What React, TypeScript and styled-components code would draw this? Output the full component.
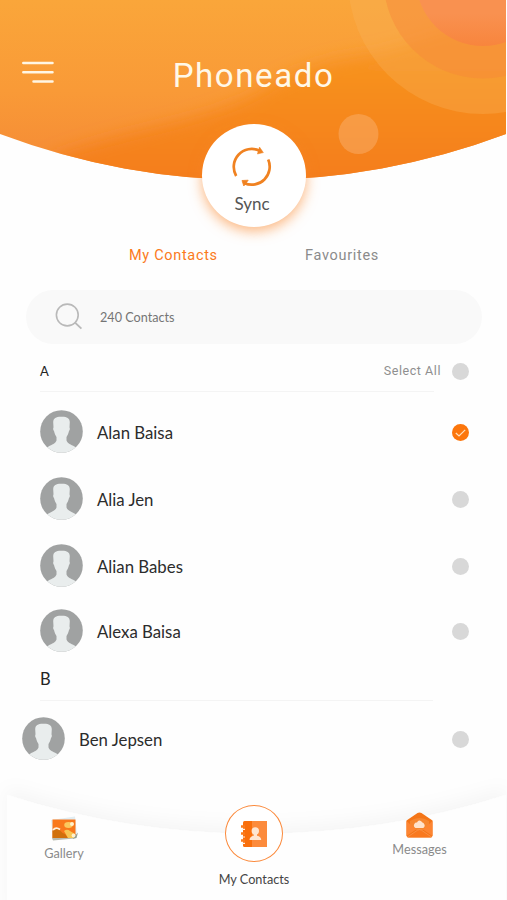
import React from 'react';
import styled, { createGlobalStyle } from 'styled-components';

const GlobalStyle = createGlobalStyle`
  * { box-sizing: border-box; }
  body { margin: 0; background: #fefefe; }
  button { border: 0; padding: 0; background: none; font: inherit; color: inherit; cursor: pointer; }
  svg { display: block; }
`;

const Screen = styled.div`
  width: 507px;
  height: 900px;
  overflow: hidden;
  display: flex;
  flex-direction: column;
  background: #fefefe;
  font-family: Lato, sans-serif;
  color: #2c2c2c;

  & > * { flex-shrink: 0; }
`;

const Header = styled.header`
  position: relative;
  height: 227px;
  display: flex;
  flex-direction: column;
  justify-content: space-between;
`;

const HeaderArt = styled.svg`
  position: absolute;
  inset: 0;
`;

const TitleBar = styled.div`
  position: relative;
  display: grid;
  grid-template-columns: 32px 1fr 32px;
  align-items: start;
  padding: 55px 22px 0;
`;

const MenuButton = styled.button`
  margin-top: 6px;
`;

const Title = styled.h1`
  margin: 1px 0 0;
  text-align: center;
  font: 400 33px/40px Roboto, sans-serif;
  letter-spacing: 1.6px;
  color: #fff8e8;
`;

const SyncButton = styled.button`
  position: relative;
  align-self: center;
  width: 104px;
  height: 103px;
  border-radius: 50%;
  background: #fff;
  box-shadow: 0 4px 13px rgba(252, 134, 40, 0.6);
  display: flex;
  flex-direction: column;
  align-items: center;
  padding: 22px 3px 0 0;
  gap: 5px;
  font-size: 17px;
  line-height: 22px;
  color: #555;
`;

const Tabs = styled.nav`
  display: flex;
  justify-content: space-between;
  margin: 19px 128px 0 129px;
  height: 20px;
`;

const Tab = styled.button<{ $active?: boolean }>`
  font: 400 14.5px/20px Roboto, sans-serif;
  letter-spacing: 0.68px;
  white-space: nowrap;
  color: ${(p) => (p.$active ? '#fb7a1c' : '#8b8b8b')};
`;

const Search = styled.label`
  display: flex;
  align-items: center;
  height: 54px;
  margin: 24px 25px 0 26px;
  padding-left: 29px;
  gap: 17px;
  border-radius: 27px;
  background: #f9f9f9;
  font-size: 12.65px;
  color: #757575;
`;

const GroupHead = styled.div<{ $height: number; $size: number; $shift: number }>`
  display: flex;
  align-items: center;
  height: ${(p) => p.$height}px;
  padding: ${(p) => Math.max(p.$shift, 0)}px 38px ${(p) => Math.max(-p.$shift, 0)}px 40px;
  font-size: ${(p) => p.$size}px;
  color: #242424;
`;

const SelectAll = styled.span`
  margin-left: auto;
  margin-right: 11px;
  font: 400 12.5px/16px Roboto, sans-serif;
  letter-spacing: 0.55px;
  color: #8f8f8f;
`;

const Rule = styled.hr<{ $width: number }>`
  width: ${(p) => p.$width}px;
  height: 1px;
  border: 0;
  margin: 0 0 0 40px;
  background: #f4f4f4;
`;

const List = styled.ul<{ $top?: number }>`
  list-style: none;
  margin: 0;
  padding: ${(p) => p.$top ?? 0}px 0 0;
`;

const Row = styled.li<{ $height: number; $inset?: number }>`
  display: flex;
  align-items: center;
  height: ${(p) => p.$height}px;
  padding: 0 38px 0 ${(p) => p.$inset ?? 40}px;
  gap: 14px;
`;

const Name = styled.span`
  font-size: 16.8px;
  line-height: 20px;
  padding-top: 3px;
  margin-right: auto;
`;

const Check = styled.button<{ $checked?: boolean; $drop?: number }>`
  width: 17px;
  height: 17px;
  border-radius: 50%;
  display: grid;
  place-items: center;
  margin-top: ${(p) => p.$drop ?? 0}px;
  background: ${(p) => (p.$checked ? '#fc760c' : '#d8d8d8')};
`;

const BottomBar = styled.footer`
  position: relative;
  height: 124px;
  margin-top: auto;
  display: grid;
  grid-template-columns: 128px 252px 79px;
  align-items: start;
  padding-top: 29px;
`;

const BarArt = styled.svg`
  position: absolute;
  inset: 0;
`;

const NavItem = styled.button<{ $top: number; $gap: number; $active?: boolean }>`
  position: relative;
  display: flex;
  flex-direction: column;
  align-items: center;
  gap: ${(p) => p.$gap}px;
  padding-top: ${(p) => p.$top}px;
  font-size: 12.7px;
  line-height: 16px;
  white-space: nowrap;
  color: ${(p) => (p.$active ? '#444' : '#8a8a8a')};
`;

const Disc = styled.span`
  width: 58px;
  height: 57px;
  border: 1.5px solid #fb8a3c;
  border-radius: 50%;
  background: #fff;
  display: grid;
  place-items: center;
`;

const Avatar = () => (
  <svg width="43" height="43" viewBox="0 0 43 43">
    <defs>
      <clipPath id="avatar-disc"><circle cx="21.5" cy="21.5" r="21.3" /></clipPath>
    </defs>
    <g clipPath="url(#avatar-disc)">
      <rect width="43" height="43" fill="#a0a2a2" />
      <path
        d="M21.500 6.800C26.500 6.600 29.600 8 29.800 12L29.500 17.500C30.100 18.300 29.800 20.400 29 21C28.500 23.500 27.400 25.500 26.500 27V30.500C27.500 33.500 31 34.500 34.500 36.500C36.500 37.700 37.500 39 38.500 41V44H4.500V41C5.500 39 6.500 37.700 8.500 36.500C12 34.500 15.500 33.500 16.500 30.500V27C15.600 25.500 14.500 23.500 14 21C13.200 20.400 12.900 18.300 13.500 17.500L13.200 12C13.400 8 16.500 6.600 21.500 6.800Z"
        fill="#e9eded"
      />
    </g>
  </svg>
);

const HeaderBackground = () => (
  <HeaderArt width="507" height="227" viewBox="0 0 507 227">
    <defs>
      <linearGradient id="sky" x1="0" y1="0" x2="0" y2="1">
        <stop offset="0" stopColor="#faa63a" />
        <stop offset="0.5" stopColor="#f99a37" />
        <stop offset="0.8" stopColor="#f68f36" />
      </linearGradient>
      <linearGradient id="dune" gradientUnits="userSpaceOnUse" x1="0" y1="40" x2="0" y2="180">
        <stop offset="0" stopColor="#f89722" />
        <stop offset="0.5" stopColor="#f6891c" />
        <stop offset="1" stopColor="#f47d1a" />
      </linearGradient>
      <linearGradient id="core" gradientUnits="userSpaceOnUse" x1="0" y1="0" x2="0" y2="46">
        <stop offset="0.300" stopColor="#f99150" />
        <stop offset="1" stopColor="#f8853d" />
      </linearGradient>
      <filter id="soft" x="-20%" y="-20%" width="140%" height="140%">
        <feGaussianBlur stdDeviation="8" />
      </filter>
      <clipPath id="bowl"><path d="M0 0H506V134A719 719 0 0 1 0 134Z" /></clipPath>
    </defs>
    <g clipPath="url(#bowl)">
      <rect width="506" height="182" fill="url(#sky)" />
      <path
        d="M50 158C120 130 210 122 262 90C300 66 335 58 370 54C430 44 450 18 540 14V240H40Z"
        fill="url(#dune)"
        filter="url(#soft)"
      />
      <circle cx="483" cy="-21" r="135" fill="#fab35c" fillOpacity="0.32" />
      <circle cx="483" cy="-21" r="99.500" fill="#f6873a" fillOpacity="0.45" />
      <circle cx="483" cy="-21" r="67" fill="url(#core)" />
      <circle cx="358.500" cy="134" r="20" fill="#fbb87c" fillOpacity="0.42" />
    </g>
  </HeaderArt>
);

const MenuIcon = () => (
  <svg width="32" height="23" viewBox="0 0 32 23" stroke="#fff6e4" strokeWidth="2.500" strokeLinecap="round">
    <path d="M1.300 2H30.500M1.300 11.300H30.500M11.500 20.600H30.500" />
  </svg>
);

const SyncIcon = () => (
  <svg width="42" height="42" viewBox="0 0 42 42" fill="none" stroke="#f08221" strokeWidth="2.700">
    <path d="M5.200 30A18 18 0 0 1 28.500 4.700" />
    <path d="M37.200 13.500A18 18 0 0 1 13.500 37.200" />
    <path d="M28.500 1L32.400 6.600L26.400 8Z" fill="#f08221" strokeWidth=".5" />
    <path d="M11 34.500L17.200 34.200L12.800 40Z" fill="#f08221" strokeWidth=".8" />
  </svg>
);

const SearchIcon = () => (
  <svg width="28" height="28" viewBox="0 0 28 28" fill="none" stroke="#b9b9b9" strokeWidth="1.600">
    <circle cx="12.300" cy="12" r="10.900" />
    <path d="M19.800 19.400L26.400 25.600" strokeWidth="1.900" />
  </svg>
);

const GalleryIcon = () => (
  <svg width="32" height="26" viewBox="0 0 32 26">
    <path d="M3 4L27 .5L29 18L5 22Z" fill="#e2edf2" />
    <path d="M4 22L29 18L26 22.500L5 24.500Z" fill="#b8bab0" />
    <rect x="4.500" y="3.500" width="23" height="18.500" fill="#f9781b" />
    <path d="M4.500 15Q8 11 11.500 14Q14 17 17 18L20 22H4.500Z" fill="#d0700c" />
    <path d="M5 14Q8 10.500 12 13.500" fill="none" stroke="#fff0df" strokeWidth="1.800" />
    <ellipse cx="20.500" cy="9" rx="4.300" ry="3" fill="#fbc85d" />
    <circle cx="24" cy="8" r="2" fill="#fff2ce" />
    <path d="M16 15Q19 12.500 22 15L27 18V22H20Z" fill="#f8c653" />
    <path d="M24.500 23L30 16.500L28.500 22Z" fill="#929d91" />
    <circle cx="25.500" cy="19.500" r="1.900" fill="#fff2cf" />
  </svg>
);

const ContactBookIcon = () => (
  <svg width="26" height="26" viewBox="0 0 26 26">
    <path d="M3.500 0H11V26H3.500Q2 26 2 24.500V1.500Q2 0 3.500 0Z" fill="#f96f0c" />
    <rect x="11" width="15" height="26" fill="#fc8b3c" />
    <path d="M0 5.500H4M0 12.500H4M0 19.500H4" stroke="#fb7c1d" strokeWidth="2.400" />
    <path d="M1 8.300H4M1 16H4M1 22.300H4" stroke="#fff2e6" strokeWidth="1.200" />
    <circle cx="14.300" cy="10" r="3.700" fill="#fee5d1" />
    <path d="M8.500 19Q8.500 15.500 12.800 14.700V12.500H16V14.700Q20.200 15.500 20.200 19Z" fill="#fee5d1" />
  </svg>
);

const MessagesIcon = () => (
  <svg width="27" height="26" viewBox="0 0 27 26">
    <path d="M.5 8.500L11.500 1Q13.500-.2 15.500 1L26.500 8.500V23.500Q26.500 25.500 24.500 25.500H2.500Q.5 25.500.5 23.500Z" fill="#f47517" />
    <path d="M4 9Q13.500 3 23 9V18H4Z" fill="#f68730" />
    <path d="M.5 9L10 17.500L.5 24Z" fill="#fd8532" />
    <path d="M26.500 9L17 17.500L26.500 24Z" fill="#fd8532" />
    <path d="M1.500 25L11.500 18.200Q13.500 17 15.500 18.200L25.500 25Q25 25.500 24.500 25.500H2.500Z" fill="#f9791f" stroke="#fbaa70" strokeWidth=".5" />
    <path d="M9.500 16Q7 14.500 8.300 12Q9.300 10.200 11 10.600Q12.500 7 15.500 9.500Q16.300 10.600 17.500 11Q20 14 17.300 16Z" fill="#ffe3cc" />
  </svg>
);

const BarBackground = () => (
  <BarArt width="507" height="124" viewBox="0 6 507 124">
    <defs>
      <filter id="lift" x="-5%" y="-30%" width="110%" height="140%">
        <feDropShadow dx="0" dy="-7" stdDeviation="9" floodColor="#000" floodOpacity="0.036" />
      </filter>
    </defs>
    <path d="M7 25A820 820 0 0 0 506 25V150H7Z" fill="#fefefe" filter="url(#lift)" />
  </BarArt>
);

const groupA = [
  { name: 'Alan Baisa', height: 67, checked: true },
  { name: 'Alia Jen', height: 67 },
  { name: 'Alian Babes', height: 66 },
  { name: 'Alexa Baisa', height: 65 },
];

export default function App() {
  return (
    <>
      <GlobalStyle />
      <Screen>
        <Header>
          <HeaderBackground />
          <TitleBar>
            <MenuButton aria-label="Menu"><MenuIcon /></MenuButton>
            <Title>Phoneado</Title>
          </TitleBar>
          <SyncButton>
            <SyncIcon />
            Sync
          </SyncButton>
        </Header>

        <Tabs>
          <Tab $active>My Contacts</Tab>
          <Tab>Favourites</Tab>
        </Tabs>

        <Search>
          <SearchIcon />
          240 Contacts
        </Search>

        <GroupHead $height={47} $size={13} $shift={7}>
          A
          <SelectAll>Select All</SelectAll>
          <Check aria-label="Select all" />
        </GroupHead>
        <Rule $width={394} />
        <List $top={6}>
          {groupA.map((c) => (
            <Row key={c.name} $height={c.height}>
              <Avatar />
              <Name>{c.name}</Name>
              <Check $checked={c.checked} $drop={2} aria-label={c.name}>
                {c.checked && (
                  <svg width="11" height="8" viewBox="0 0 11 8" fill="none" stroke="#ffe0bd" strokeWidth="1.200">
                    <path d="M.8 4L4 7L10.200.8" />
                  </svg>
                )}
              </Check>
            </Row>
          ))}
        </List>

        <GroupHead $height={37} $size={16.5} $shift={-6}>B</GroupHead>
        <Rule $width={393} />
        <List>
          <Row $height={75} $inset={22}>
            <Avatar />
            <Name>Ben Jepsen</Name>
            <Check $drop={2} aria-label="Ben Jepsen" />
          </Row>
        </List>

        <BottomBar>
          <BarBackground />
          <NavItem $top={11} $gap={3}><GalleryIcon />Gallery</NavItem>
          <NavItem $top={0} $gap={9} $active>
            <Disc><ContactBookIcon /></Disc>
            My Contacts
          </NavItem>
          <NavItem $top={7} $gap={3}><MessagesIcon />Messages</NavItem>
        </BottomBar>
      </Screen>
    </>
  );
}
